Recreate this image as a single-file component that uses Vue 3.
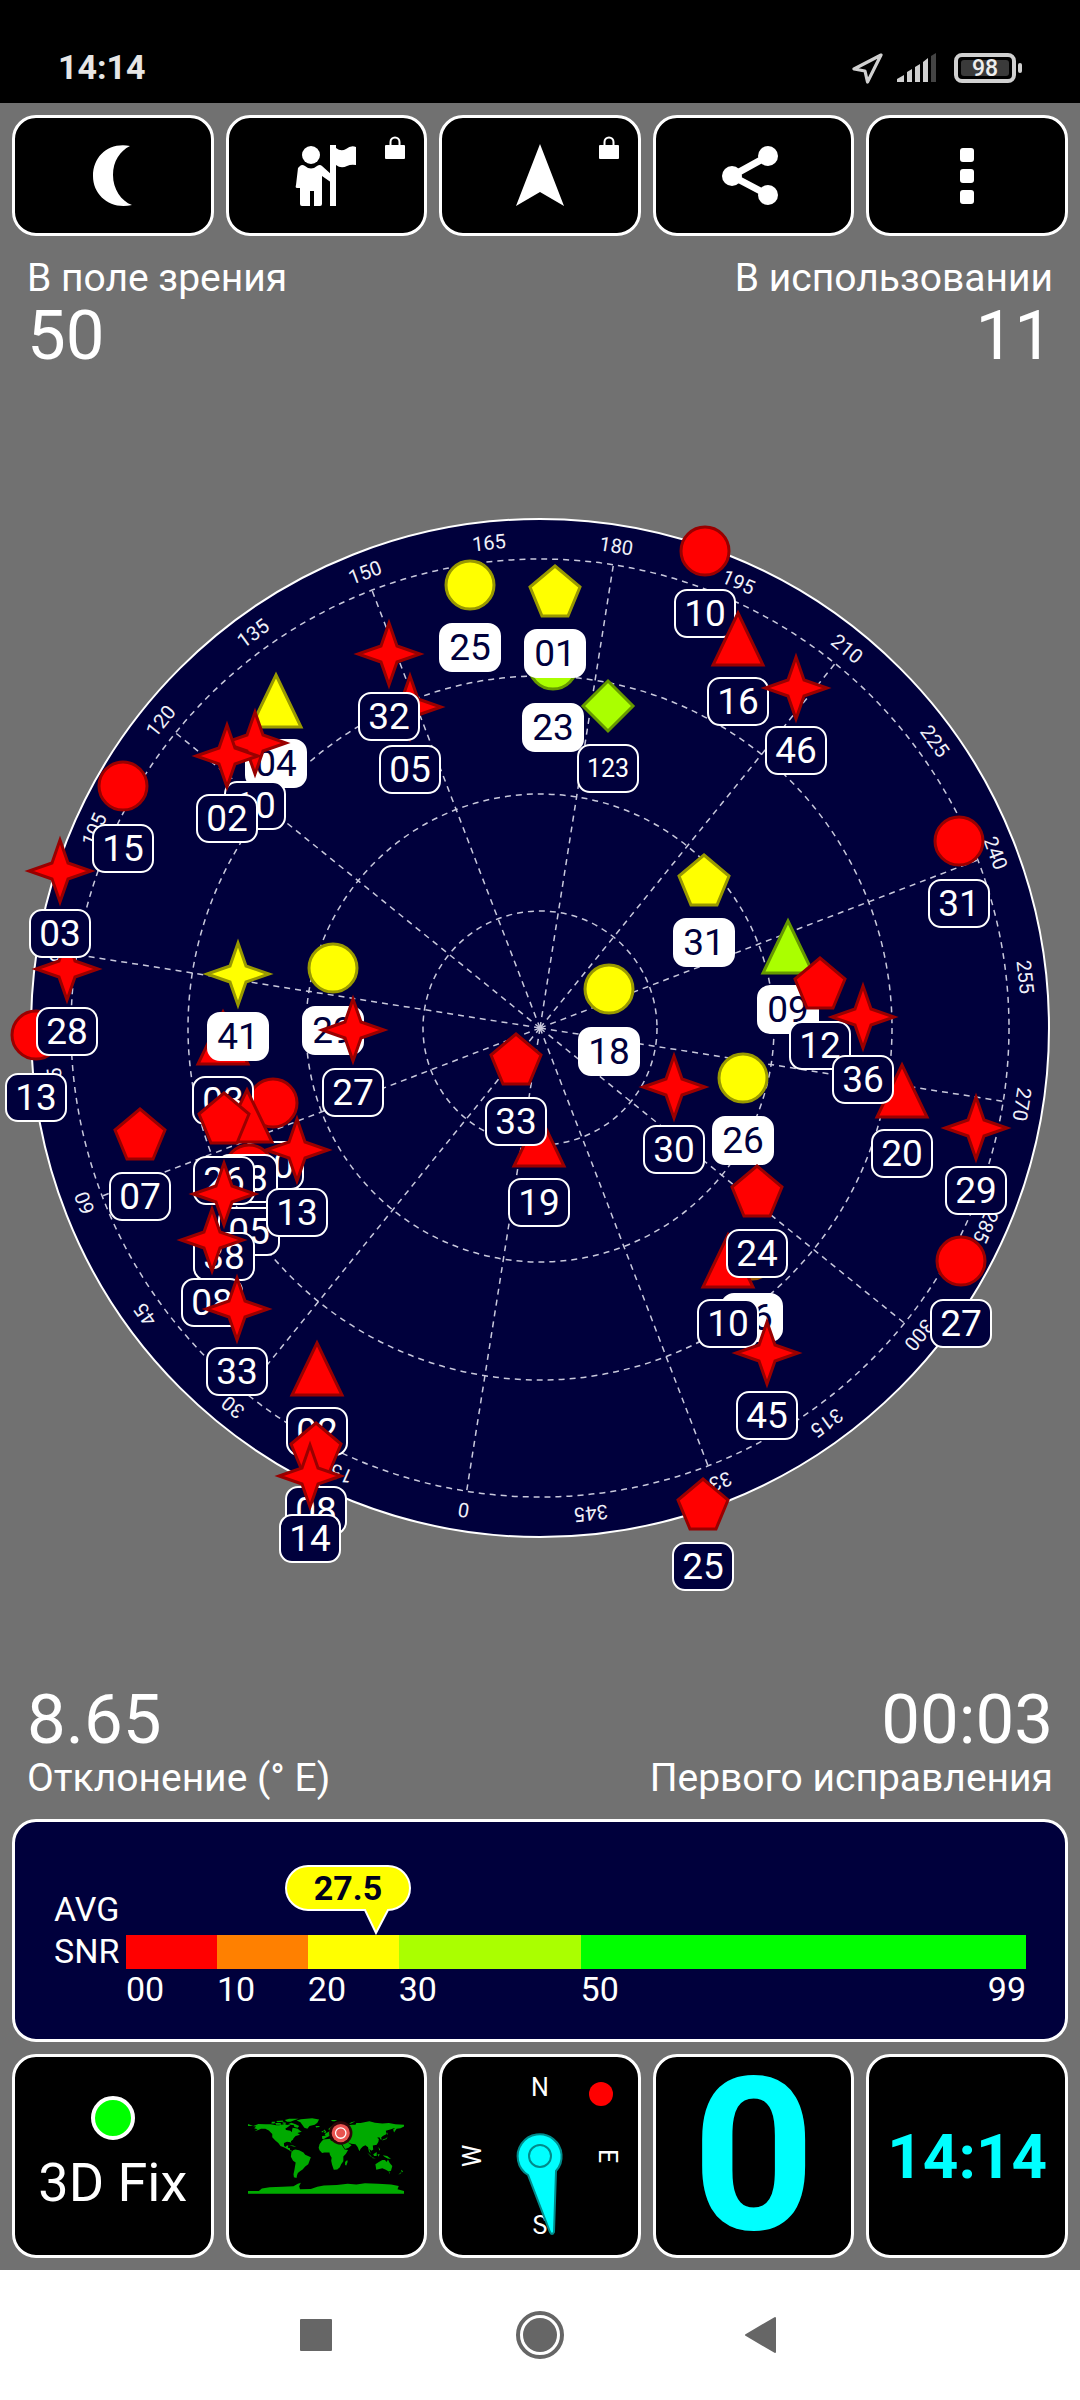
<script setup>
const center = { x: 540, y: 1028 }
const ringRadii = [117, 234, 352, 469]
const heading = 171

const spokes = Array.from({ length: 12 }, (_, i) => i * 30 - heading)
const bearings = Array.from({ length: 24 }, (_, i) => ({ text: i * 15, angle: i * 15 - heading }))

const fills = { r: '#ff0000', y: '#ffff00', g: '#aaff00', o: '#ff8000' }
const strokes = { r: '#990000', y: '#999900', g: '#669900', o: '#995500' }

const outlines = {
  triangle: '0,-26 25,26 -25,26',
  pentagon: '0,-25 25,-4 13,25 -13,25 -25,-4',
  star: '0,-31 8,-8 31,0 8,8 0,31 -8,8 -31,0 -8,-8',
  diamond: '0,-25 25,0 0,25 -25,0'
}

// shape, colour, x, y, id, used in fix
const satellites = [
  ['circle', 'y', 470, 585, '25', true],
  ['circle', 'r', 123, 786, '15', false],
  ['circle', 'r', 36, 1035, '13', false],
  ['circle', 'y', 333, 968, '29', true],
  ['circle', 'r', 273, 1103, '20', false],
  ['circle', 'r', 249, 1169, '05', false],
  ['circle', 'r', 961, 1261, '27', false],
  ['circle', 'o', 752, 1255, '06', true],
  ['circle', 'r', 705, 551, '10', false],
  ['circle', 'g', 553, 665, '23', true],
  ['circle', 'r', 959, 841, '31', false],
  ['circle', 'y', 609, 989, '18', true],
  ['circle', 'y', 743, 1078, '26', true],
  ['diamond', 'g', 608, 706, '123', false],
  ['triangle', 'y', 276, 701, '04', true],
  ['triangle', 'r', 223, 1038, '03', false],
  ['triangle', 'r', 247, 1116, '08', false],
  ['triangle', 'r', 317, 1369, '02', false],
  ['triangle', 'r', 728, 1261, '10', false],
  ['triangle', 'r', 738, 639, '16', false],
  ['triangle', 'g', 788, 947, '09', true],
  ['triangle', 'r', 902, 1091, '20', false],
  ['triangle', 'r', 539, 1140, '19', false],
  ['pentagon', 'r', 224, 1118, '26', false],
  ['pentagon', 'r', 140, 1134, '07', false],
  ['pentagon', 'r', 316, 1448, '08', false],
  ['pentagon', 'r', 703, 1504, '25', false],
  ['pentagon', 'r', 757, 1191, '24', false],
  ['pentagon', 'y', 555, 591, '01', true],
  ['pentagon', 'y', 704, 880, '31', true],
  ['pentagon', 'r', 820, 983, '12', false],
  ['pentagon', 'r', 516, 1059, '33', false],
  ['star', 'r', 410, 707, '05', false],
  ['star', 'r', 389, 654, '32', false],
  ['star', 'r', 255, 743, '10', false],
  ['star', 'r', 227, 756, '02', false],
  ['star', 'r', 67, 969, '28', false],
  ['star', 'r', 60, 871, '03', false],
  ['star', 'y', 238, 974, '41', true],
  ['star', 'r', 353, 1030, '27', false],
  ['star', 'r', 297, 1150, '13', false],
  ['star', 'r', 224, 1194, '38', false],
  ['star', 'r', 212, 1240, '08', false],
  ['star', 'r', 237, 1309, '33', false],
  ['star', 'r', 310, 1476, '14', false],
  ['star', 'r', 767, 1353, '45', false],
  ['star', 'r', 796, 688, '46', false],
  ['star', 'r', 674, 1087, '30', false],
  ['star', 'r', 863, 1017, '36', false],
  ['star', 'r', 976, 1128, '29', false]
].map(([shape, colour, x, y, id, used]) => ({ shape, colour, x, y, id, used }))

const average = 27.5
const scaleMax = 99
const bands = [
  { from: 0, to: 10, label: '00', colour: '#ff0000' },
  { from: 10, to: 20, label: '10', colour: '#ff8000' },
  { from: 20, to: 30, label: '20', colour: '#ffff00' },
  { from: 30, to: 50, label: '30', colour: '#aaff00' },
  { from: 50, to: 99, label: '50', colour: '#00ff00' }
]
</script>

<template>
  <div class="screen">
    <header class="status">
      <span class="status-time">14:14</span>
      <div class="status-icons">
        <svg width="32" height="32" viewBox="0 0 32 32" aria-hidden="true">
          <path d="M29 3 L2 17 L13 19 L15.500 30 Z" fill="none" stroke="#d0d0d0" stroke-width="3.200" stroke-linejoin="round" />
        </svg>
        <svg width="42" height="30" viewBox="0 0 42 30" aria-hidden="true">
          <path d="M1 29 V26 L8 22 V29Z M11 29 V19 L16 16 V29Z M19 29 V14 L24 11 V29Z M27 29 V9 L32 5 V29Z" fill="#d0d0d0" />
          <path d="M35 29 V3 L40 0 V29Z" fill="#444" />
        </svg>
        <span class="battery"><span class="battery-level">98</span></span>
      </div>
    </header>

    <nav class="tiles toolbar">
      <button class="tile" aria-label="Night mode">
        <svg width="64" height="64" viewBox="0 0 64 64">
          <path d="M49 2 C28 -2 12 12 12 32 S30 66 51 61 C40 57 32 45 32 31 S39 7 49 2Z" fill="#fff" />
        </svg>
      </button>
      <button class="tile" aria-label="Waypoints">
        <svg width="64" height="64" viewBox="0 0 64 64">
          <g fill="#fff">
            <circle cx="17" cy="11" r="9" />
            <path d="M6 22 Q8 20 11 22 Q17 27 23 22 Q26 20 28 22 L38 31 V39 L28 32 V60 Q28 62 26 62 H20 V47 H16 V62 H8 Q6 62 6 60 V44 H3 Q1 44 2 41 L4 24Z" />
            <rect x="36" y="1" width="6" height="61" />
            <path d="M42 4 Q47 8 52 5 Q57 1 62 3 V21 Q57 20 53 22 Q47 25 42 21Z" />
          </g>
        </svg>
        <svg class="lock" width="20" height="23" viewBox="0 0 20 23">
          <path d="M5.500 10 V6 a4.500 4.500 0 0 1 9 0 V10" fill="none" stroke="#fff" stroke-width="2" />
          <rect y="9" width="20" height="14" rx="1" fill="#fff" />
        </svg>
      </button>
      <button class="tile" aria-label="Navigate">
        <svg width="64" height="64" viewBox="0 0 64 64">
          <path d="M32 0 L56 62 L32 48 L8 62Z" fill="#fff" />
        </svg>
        <svg class="lock" width="20" height="23" viewBox="0 0 20 23">
          <path d="M5.500 10 V6 a4.500 4.500 0 0 1 9 0 V10" fill="none" stroke="#fff" stroke-width="2" />
          <rect y="9" width="20" height="14" rx="1" fill="#fff" />
        </svg>
      </button>
      <button class="tile" aria-label="Share">
        <svg width="64" height="64" viewBox="0 0 64 64">
          <path d="M46 12 L10 32 L46 51" fill="none" stroke="#fff" stroke-width="7" />
          <g fill="#fff">
            <circle cx="46" cy="12" r="10" />
            <circle cx="10" cy="32" r="10" />
            <circle cx="46" cy="51" r="10" />
          </g>
        </svg>
      </button>
      <button class="tile" aria-label="Menu">
        <svg width="64" height="64" viewBox="0 0 64 64">
          <g fill="#fff">
            <rect x="25" y="4" width="14" height="14" rx="3" />
            <rect x="25" y="25" width="14" height="14" rx="3" />
            <rect x="25" y="46" width="14" height="14" rx="3" />
          </g>
        </svg>
      </button>
    </nav>

    <section class="stats stats-top">
      <div class="stat">
        <span class="stat-label">В поле зрения</span>
        <span class="stat-value">50</span>
      </div>
      <div class="stat stat-right">
        <span class="stat-label">В использовании</span>
        <span class="stat-value">11</span>
      </div>
    </section>

    <main class="sky">
      <svg class="radar" viewBox="0 458 1080 1140">
        <circle :cx="center.x" :cy="center.y" r="509" fill="#00003c" stroke="#fff" stroke-width="2" />
        <g class="grid">
          <circle v-for="r in ringRadii" :key="r" :cx="center.x" :cy="center.y" :r="r" />
          <line
            v-for="a in spokes" :key="a"
            :x1="center.x" :y1="center.y" :x2="center.x" :y2="center.y - 469"
            :transform="`rotate(${a} ${center.x} ${center.y})`"
          />
        </g>
        <text
          v-for="b in bearings" :key="b.text" class="bearing"
          :x="center.x" :y="center.y - 481"
          :transform="`rotate(${b.angle} ${center.x} ${center.y})`"
        >{{ b.text }}</text>
        <g v-for="(s, i) in satellites" :key="i" :transform="`translate(${s.x} ${s.y})`">
          <circle v-if="s.shape === 'circle'" r="24" :fill="fills[s.colour]" :stroke="strokes[s.colour]" stroke-width="3" />
          <polygon v-else :points="outlines[s.shape]" :fill="fills[s.colour]" :stroke="strokes[s.colour]" stroke-width="3" />
          <rect class="tag" :class="{ used: s.used }" x="-30" y="39" width="60" height="47" rx="12" />
          <text class="tag-text" :class="{ used: s.used, small: s.id.length > 2 }" y="62" dominant-baseline="central">{{ s.id }}</text>
        </g>
      </svg>
    </main>

    <section class="stats">
      <div class="stat">
        <span class="stat-value">8.65</span>
        <span class="stat-label">Отклонение (° E)</span>
      </div>
      <div class="stat stat-right">
        <span class="stat-value">00<span class="colon">:</span>03</span>
        <span class="stat-label">Первого исправления</span>
      </div>
    </section>

    <section class="snr">
      <div class="snr-name"><span>AVG</span><span>SNR</span></div>
      <div class="scale">
        <div class="bar">
          <span
            v-for="b in bands" :key="b.label" class="band"
            :style="{ flexGrow: b.to - b.from, background: b.colour }"
          ></span>
          <div class="pointer" :style="{ left: (average / scaleMax) * 100 + '%' }">
            <svg width="126" height="70" viewBox="0 0 126 70" aria-hidden="true">
              <path d="M23 1 H103 a22 22 0 0 1 0 44 L91 68 L80 45 H23 a22 22 0 0 1 0 -44Z" fill="#ff0" stroke="#fff" stroke-width="2" />
            </svg>
            <span class="pointer-value">{{ average }}</span>
          </div>
        </div>
        <div class="ticks">
          <span v-for="b in bands" :key="b.label" class="tick" :style="{ flexGrow: b.to - b.from }">{{ b.label }}</span>
          <span class="tick-end">99</span>
        </div>
      </div>
    </section>

    <section class="tiles widgets">
      <button class="tile fix">
        <span class="fix-lamp"></span>
        <span class="fix-text">3D Fix</span>
      </button>
      <button class="tile" aria-label="World map">
        <svg width="156" height="76" viewBox="-180 -84 360 174">
          <g fill="#00aa00">
            <path d="M-180 -71 L-168 -66 L-156 -71 L-140 -70 L-128 -70 L-115 -68 L-108 -68 L-95 -71 L-92 -69 L-82 -68 L-88 -64 L-94 -60 L-92 -57 L-82 -55 L-79 -52 L-78 -58 L-77 -62 L-70 -61 L-65 -60 L-62 -57 L-56 -53 L-66 -50 L-60 -46 L-70 -43 L-75 -38 L-76 -35 L-81 -31 L-80 -25 L-82 -29 L-90 -30 L-97 -27 L-97 -21 L-94 -18 L-90 -21 L-87 -21 L-88 -16 L-83 -15 L-83 -10 L-78 -9 L-80 -7 L-86 -11 L-95 -16 L-105 -20 L-110 -27 L-117 -33 L-124 -40 L-124 -48 L-132 -56 L-140 -60 L-150 -60 L-156 -57 L-165 -54 L-158 -59 L-166 -61 L-161 -65 L-170 -66 L-180 -66Z" />
            <path d="M-88 -70 L-80 -74 L-70 -70 L-62 -66 L-65 -62 L-73 -64 L-74 -68 L-82 -69Z M-117 -73 L-105 -73 L-103 -69 L-115 -69Z M-125 -76 L-117 -76 L-119 -72 L-126 -72Z M-100 -75 L-92 -74 L-94 -71 L-100 -72Z M-95 -80 L-85 -83 L-63 -83 L-75 -79 L-82 -76 L-90 -76Z M-115 -78 L-100 -79 L-98 -76 L-112 -75Z" />
            <path d="M-68 -79 L-58 -82 L-32 -84 L-16 -81 L-20 -74 L-26 -69 L-38 -66 L-43 -60 L-50 -62 L-54 -68 L-59 -75Z M-24 -66 L-15 -66 L-15 -64 L-23 -63Z" />
            <path d="M-85 -22 L-76 -21 L-68 -18 L-75 -19Z M-80 -5 L-76 -10 L-71 -12 L-62 -10 L-52 -5 L-48 0 L-35 6 L-38 14 L-41 22 L-48 27 L-54 34 L-60 38 L-65 42 L-67 48 L-68 54 L-74 52 L-75 45 L-73 36 L-70 18 L-76 14 L-81 5Z" />
            <path d="M-6 -35 L10 -37 L11 -33 L20 -31 L32 -31 L36 -23 L43 -12 L51 -11 L46 -2 L40 4 L40 15 L35 22 L32 29 L26 34 L18 35 L14 23 L12 14 L13 7 L9 0 L8 -5 L-4 -5 L-9 -4 L-15 -10 L-17 -16 L-15 -24 L-10 -31Z M49 12 L50 16 L47 25 L44 24 L44 17Z" />
            <path d="M-9 -43 L-1 -44 L-3 -48 L8 -54 L10 -57 L19 -54 L24 -58 L29 -60 L22 -61 L25 -66 L16 -57 L12 -56 L5 -59 L12 -65 L22 -71 L30 -71 L41 -67 L34 -65 L44 -67 L60 -69 L68 -69 L70 -73 L80 -73 L100 -77 L113 -74 L130 -72 L145 -73 L160 -70 L180 -69 L180 -65 L172 -61 L163 -60 L157 -51 L155 -58 L160 -62 L150 -59 L138 -55 L140 -48 L131 -43 L127 -39 L129 -35 L126 -35 L123 -40 L118 -39 L122 -36 L121 -30 L117 -23 L108 -21 L109 -12 L105 -9 L100 -13 L103 -2 L99 -8 L97 -17 L91 -22 L85 -19 L80 -14 L77 -8 L73 -18 L68 -24 L58 -25 L50 -29 L56 -24 L59 -22 L52 -16 L44 -13 L35 -28 L36 -36 L27 -37 L28 -41 L23 -37 L19 -42 L13 -45 L18 -40 L14 -38 L9 -44 L0 -39 L-5 -36 L-9 -37Z" />
            <path d="M-5 -50 L1 -51 L0 -54 L-4 -58 L-6 -56 L-3 -54Z M-10 -52 L-6 -52 L-6 -55 L-10 -54Z M11 -80 L26 -80 L20 -77 L15 -77Z M53 -71 L58 -75 L68 -77 L58 -72Z M130 -33 L140 -36 L142 -42 L139 -38 L131 -35Z M142 -52 L143 -47 L141 -46Z M95 -5 L106 5 L103 4Z M105 6 L115 8 L108 8Z M109 -1 L117 -6 L117 3 L111 3Z M119 -1 L124 -1 L121 5Z M121 -18 L125 -12 L123 -9Z M131 1 L141 3 L150 10 L142 9 L135 5Z" />
            <path d="M114 22 L122 17 L130 12 L136 12 L140 17 L143 11 L147 19 L153 26 L150 37 L145 39 L138 35 L130 31 L116 35Z M145 41 L148 41 L147 44Z M173 35 L178 38 L175 41Z M172 41 L174 42 L167 46Z" />
            <path d="M-180 84 L-155 84 L-148 78 L-130 75 L-100 74 L-75 73 L-65 67 L-58 65 L-62 73 L-60 80 L-35 79 L-20 74 L-5 71 L25 70 L50 67 L70 69 L90 66 L120 67 L150 69 L168 72 L165 80 L180 84 V90 H-180Z" />
          </g>
          <circle cx="34" cy="-50" r="27" fill="#2b0708" />
          <circle cx="34" cy="-50" r="21" fill="#e85350" />
          <circle cx="34" cy="-50" r="12" fill="none" stroke="#fff" stroke-width="3" />
        </svg>
      </button>
      <button class="tile" aria-label="Compass">
        <svg width="184" height="184" viewBox="-12 -12 184 184">
          <g class="compass-letter">
            <text x="80" y="20">N</text>
            <text x="80" y="158">S</text>
            <text transform="translate(21 80) rotate(-90)">W</text>
            <text transform="translate(139 80) rotate(90)">E</text>
          </g>
          <circle cx="141" cy="18" r="12" fill="#f00" />
          <path d="M68 99 A22 22 0 1 1 96 95 L94 156 Q92 160 90 156Z" fill="#00ffff" stroke="#008b8b" stroke-width="2" />
          <circle cx="80" cy="80" r="11" fill="none" stroke="#008b8b" stroke-width="2" />
        </svg>
      </button>
      <button class="tile speed">0</button>
      <button class="tile clock"><span>14<span class="colon">:</span>14</span></button>
    </section>

    <footer class="system">
      <button aria-label="Recent apps">
        <svg width="64" height="64" viewBox="0 0 64 64"><rect x="16" y="16" width="32" height="32" rx="1" fill="#666" /></svg>
      </button>
      <button aria-label="Home">
        <svg width="64" height="64" viewBox="0 0 64 64">
          <circle cx="32" cy="32" r="22" fill="none" stroke="#666" stroke-width="4" />
          <circle cx="32" cy="32" r="17" fill="#666" />
        </svg>
      </button>
      <button aria-label="Back">
        <svg width="64" height="64" viewBox="0 0 64 64"><path d="M14 32 L43 15 V49Z" fill="#666" stroke="#666" stroke-width="2" stroke-linejoin="round" /></svg>
      </button>
    </footer>
  </div>
</template>

<style>
body {
  margin: 0;
  background: #717171;
}
</style>

<style scoped>
.screen {
  display: flex;
  flex-direction: column;
  min-height: 100vh;
  background: #717171;
  color: #fff;
  font-family: Roboto, "Noto Sans", sans-serif;
}

button {
  margin: 0;
  padding: 0;
  border: 0;
  background: none;
  color: inherit;
  font: inherit;
}

svg {
  display: block;
}

.status {
  display: flex;
  justify-content: space-between;
  height: 71px;
  padding: 32px 56px 0 58px;
  background: #000;
}

.status-time {
  color: #e6e6e6;
  font-size: 34px;
  font-weight: 700;
  line-height: 70px;
}

.status-icons {
  display: flex;
  align-items: center;
  gap: 12px;
}

.battery {
  position: relative;
  display: flex;
  box-sizing: border-box;
  width: 62px;
  height: 30px;
  margin: 0 8px 0 4px;
  padding: 3px;
  border: 4px solid #d0d0d0;
  border-radius: 8px;
}

.battery::after {
  content: "";
  position: absolute;
  top: 6px;
  right: -10px;
  width: 4px;
  height: 10px;
  border-radius: 2px;
  background: #d0d0d0;
}

.battery-level {
  flex: 1;
  border-radius: 3px;
  background: #3a3a3a;
  color: #eee;
  font-size: 23px;
  font-weight: 500;
  line-height: 17px;
  text-align: center;
}

.tiles {
  display: grid;
  grid-template-columns: repeat(5, minmax(0, 1fr));
  gap: 12px;
  padding: 12px;
}

.toolbar {
  grid-auto-rows: 121px;
  padding-bottom: 0;
}

.widgets {
  grid-auto-rows: 204px;
}

.tile {
  position: relative;
  display: flex;
  align-items: center;
  justify-content: center;
  border: 3px solid #fff;
  border-radius: 24px;
  background: #000;
}

.lock {
  position: absolute;
  top: 18px;
  right: 19px;
}

.stats {
  display: flex;
  justify-content: space-between;
  padding: 0 27px 18px;
}

.stats-top {
  padding: 19px 27px 0;
}

.stat {
  display: flex;
  flex-direction: column;
}

.stat-right {
  align-items: flex-end;
}

.stat-label {
  font-size: 39px;
  line-height: 46px;
}

.stat-value {
  font-size: 69px;
  line-height: 70px;
}

.colon {
  vertical-align: 12%;
  line-height: 0;
}

.sky {
  display: flex;
  flex: 1;
  align-items: center;
}

.radar {
  width: 100%;
  height: auto;
}

.grid {
  fill: none;
  stroke: #c8c8dc;
  stroke-width: 1.500;
  stroke-dasharray: 6 5;
}

.bearing {
  fill: #f0f0f8;
  font-size: 20px;
  text-anchor: middle;
}

.tag {
  fill: #00003c;
  stroke: #fff;
  stroke-width: 2;
}

.tag.used {
  fill: #fff;
}

.tag-text {
  fill: #fff;
  font-size: 37px;
  text-anchor: middle;
}

.tag-text.used {
  fill: #00003c;
}

.tag-text.small {
  font-size: 25px;
}

.snr {
  display: flex;
  height: 139px;
  margin: 0 12px;
  padding: 39px 39px;
  border: 3px solid #fff;
  border-radius: 24px;
  background: #00003c;
  font-size: 34px;
}

.snr-name {
  display: flex;
  flex-direction: column;
  width: 72px;
  padding-top: 27px;
  line-height: 42px;
}

.scale {
  flex: 1;
  padding-top: 74px;
}

.bar {
  position: relative;
  display: flex;
  height: 34px;
}

.band,
.tick {
  flex-basis: 0;
}

.pointer {
  position: absolute;
  bottom: 0;
  width: 126px;
  height: 104px;
  margin-left: -91px;
}

.pointer-value {
  position: absolute;
  top: 0;
  left: 0;
  width: 100%;
  color: #000020;
  font-weight: 700;
  line-height: 46px;
  text-align: center;
}

.ticks {
  position: relative;
  display: flex;
  line-height: 40px;
}

.tick-end {
  position: absolute;
  right: 0;
}

.fix {
  flex-direction: column;
  gap: 10px;
}

.fix-lamp {
  box-sizing: border-box;
  width: 44px;
  height: 44px;
  border: 4px solid #fff;
  border-radius: 50%;
  background: #0f0;
}

.fix-text {
  font-size: 54px;
  line-height: 66px;
}

.compass-letter {
  fill: #fff;
  font-size: 25px;
  text-anchor: middle;
}

.speed,
.clock {
  color: #0ff;
  font-weight: 700;
}

.speed {
  font-size: 214px;
  line-height: 200px;
}

.clock {
  font-size: 62px;
}

.system {
  display: flex;
  align-items: center;
  justify-content: center;
  gap: 160px;
  height: 130px;
  background: #fff;
}
</style>
